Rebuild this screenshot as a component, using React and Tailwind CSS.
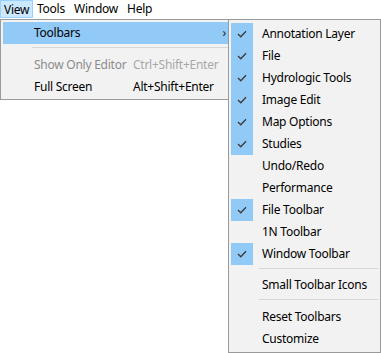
import React from 'react';

const SUB_ITEMS = [
  { label: 'Annotation Layer', checked: true },
  { label: 'File', checked: true },
  { label: 'Hydrologic Tools', checked: true },
  { label: 'Image Edit', checked: true },
  { label: 'Map Options', checked: true },
  { label: 'Studies', checked: true },
  { label: 'Undo/Redo', checked: false },
  { label: 'Performance', checked: false },
  { label: 'File Toolbar', checked: true },
  { label: '1N Toolbar', checked: false },
  { label: 'Window Toolbar', checked: true },
  { sep: 'h-[9px]' },
  { label: 'Small Toolbar Icons', checked: false },
  { sep: 'h-[10px]' },
  { label: 'Reset Toolbars', checked: false },
  { label: 'Customize', checked: false },
];

function Check() {
  return (
    <svg width="10" height="8" viewBox="0 0 10 8" fill="none">
      <path d="M1 4 L3.8 6.8 L9 1.2" stroke="#3a3a3a" strokeWidth="1.3" />
    </svg>
  );
}

export default function App() {
  return (
    <div
      className="relative w-[381px] h-[353px] bg-white text-[12px] tracking-[-0.25px] text-black overflow-hidden"
      style={{ fontFamily: '"Noto Sans", "DejaVu Sans", sans-serif' }}
    >
      {/* menu bar */}
      <div className="flex h-[19px] items-stretch leading-[17px]">
        <div className="h-[18px] w-[33px] pl-[3px] mr-[4px] bg-[#cce8ff] border border-[#99d1ff]">View</div>
        <div className="w-[37px]">Tools</div>
        <div className="w-[53px]">Window</div>
        <div>Help</div>
      </div>

      {/* View menu */}
      <div className="absolute left-0 top-[19px] w-[231px] h-[81px] bg-[#f2f2f2] border border-[#9a9a9a] p-[2px]">
        <div className="flex items-center h-[22px] bg-[#91c9f7] pl-[31px] pr-[2px]">
          <span className="flex-1">Toolbars</span>
          <span className="text-[#222] leading-none">›</span>
        </div>
        <div className="h-[10px] pt-[3px] pl-[29px]">
          <div className="h-px bg-[#d7d7d7]" />
        </div>
        <div className="flex items-center h-[22px] pl-[31px] text-[#8c8c8c]">
          <span className="w-[99px]">Show Only Editor</span>
          <span className="text-[#a8a8a8]">Ctrl+Shift+Enter</span>
        </div>
        <div className="flex items-center h-[22px] pl-[31px]">
          <span className="w-[99px]">Full Screen</span>
          <span>Alt+Shift+Enter</span>
        </div>
      </div>

      {/* Toolbars submenu */}
      <div className="absolute left-[228px] top-[19px] w-[153px] h-[334px] bg-[#f2f2f2] border border-[#9a9a9a] px-[2px] pt-[3px]">
        {SUB_ITEMS.map((it, i) =>
          it.sep ? (
            <div key={i} className={`${it.sep} pt-[3px] pl-[28px]`}>
              <div className="h-px bg-[#d7d7d7]" />
            </div>
          ) : (
            <div key={i} className="flex items-center h-[22px]">
              <div
                className={`w-[22px] h-[22px] flex items-center justify-center ${it.checked ? 'bg-[#91c9f7]' : ''}`}
              >
                {it.checked && <Check />}
              </div>
              <span className="pl-[9px]">{it.label}</span>
            </div>
          )
        )}
      </div>
    </div>
  );
}
